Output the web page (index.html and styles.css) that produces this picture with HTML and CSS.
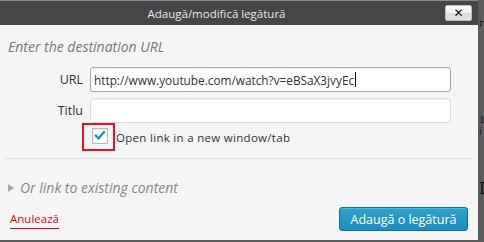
FILE: index.html
```html
<!DOCTYPE html>
<html lang="ro">
<head>
<meta charset="utf-8">
<title>Adaugă/modifică legătură</title>
<link rel="stylesheet" href="styles.css">
</head>
<body>
<div class="page">
  <div class="dialog">
    <div class="titlebar">
      <div class="title">Adaugă/modifică legătură</div>
      <button class="close" type="button" aria-label="Închide">✕</button>
    </div>
    <div class="content">
      <p class="hint">Enter the destination URL</p>
      <div class="row">
        <span class="label">URL</span>
        <div class="field focused"><span class="value">http://www.youtube.com/watch?v=eBSaX3jvyEc</span><span class="caret"></span></div>
      </div>
      <div class="row">
        <span class="label">Titlu</span>
        <div class="field"></div>
      </div>
      <div class="check-row">
        <span class="highlight">
          <span class="checkbox">
            <svg viewBox="0 0 16 16" width="14" height="14"><path d="M3.2 7.6 L6.4 10.8 L12.6 3.6" fill="none" stroke="#1e8cbe" stroke-width="2.6" stroke-linecap="square"/></svg>
          </span>
        </span>
        <span class="check-label">Open link in a new window/tab</span>
      </div>
      <div class="separator"></div>
      <div class="existing">
        <span class="triangle"></span>
        <span class="existing-text">Or link to existing content</span>
      </div>
    </div>
    <div class="footer">
      <a class="cancel" href="#">Anulează</a>
      <button class="submit" type="button">Adaugă o legătură</button>
    </div>
  </div>
  <div class="strip">
    <span class="frag f1">r</span>
    <span class="frag f2">1</span>
    <span class="frag f3">i</span>
    <span class="frag f4">I</span>
  </div>
</div>
</body>
</html>
```
FILE: styles.css
```css
html, body {
  margin: 0;
  padding: 0;
}
body {
  background: #5c5c5c;
  font-family: "Open Sans", "DejaVu Sans", sans-serif;
  width: 484px;
  height: 242px;
  overflow: hidden;
}
.page {
  display: flex;
  align-items: flex-start;
}
.dialog {
  width: 478px;
  height: 240px;
  background: #f5f5f5;
  display: flex;
  flex-direction: column;
  flex: none;
}
.titlebar {
  height: 24px;
  border-top: 1px solid #8a8a8a;
  background: #464646;
  display: flex;
  align-items: center;
  padding-right: 6px;
}
.title {
  flex: 1;
  text-align: center;
  color: #e8e8e8;
  font-size: 11.5px;
  padding-right: 12px;
}
.close {
  box-sizing: border-box;
  width: 27px;
  height: 16px;
  margin-top: -1px;
  padding: 0;
  border: 1px solid #bdbdbd;
  border-radius: 2px;
  background: linear-gradient(#fafafa 0%, #f2f2f2 50%, #dcdcdc 51%, #e2e2e2 100%);
  color: #111;
  font-size: 12px;
  font-weight: bold;
  line-height: 14px;
  font-family: "DejaVu Sans", sans-serif;
}
.content {
  padding: 0 5px;
}
.hint {
  margin: 13px 0 0 3px;
  font-size: 14px;
  line-height: 18px;
  font-style: italic;
  color: #7a7a7a;
}
.row {
  display: flex;
  align-items: center;
  gap: 6px;
  margin-top: 6px;
}
.hint + .row {
  margin-top: 11px;
}
.label {
  width: 78px;
  text-align: right;
  font-size: 12.5px;
  color: #333;
}
.field {
  width: 356px;
  height: 23px;
  margin-left: 1px;
  border: 1px solid #dcdcdc;
  border-radius: 3px;
  background: #fff;
  box-shadow: inset 0 1px 2px rgba(0,0,0,0.07);
  display: flex;
  align-items: center;
  padding-left: 3px;
  font-size: 11.8px;
  color: #333;
  box-sizing: content-box;
}
.field.focused {
  border-color: #a8a8a8;
}
.caret {
  width: 1px;
  height: 15px;
  background: #111;
  margin-left: 1px;
}
.check-row {
  display: flex;
  align-items: center;
  margin-left: 77px;
  gap: 1px;
}
.highlight {
  display: flex;
  border: 2px solid #e8141c;
  padding: 3px 5px 5px 8px;
}
.checkbox {
  width: 14px;
  height: 14px;
  border: 1px solid #b4b9be;
  background: #fff;
  box-shadow: inset 0 1px 2px rgba(0,0,0,0.1);
  display: flex;
  align-items: center;
  justify-content: center;
}
.check-label {
  font-size: 11.5px;
  letter-spacing: 0.3px;
  color: #333;
}
.separator {
  height: 1px;
  background: #dddddd;
  margin-top: 7px;
}
.existing {
  display: flex;
  align-items: center;
  margin: 20px 0 0 3px;
  gap: 6px;
  color: #888;
}
.triangle {
  width: 0;
  height: 0;
  border-top: 4px solid transparent;
  border-bottom: 4px solid transparent;
  border-left: 6px solid #a8a8a8;
}
.existing-text {
  font-size: 14px;
  line-height: 18px;
  font-style: italic;
}
.footer {
  margin-top: auto;
  padding: 0 10px 9px 10px;
  display: flex;
  align-items: center;
  justify-content: space-between;
}
.cancel {
  font-size: 11.5px;
  color: #e00b0b;
  text-decoration: none;
  border-bottom: 1px solid #e00b0b;
  line-height: 16px;
  padding-bottom: 1px;
  margin-top: 2px;
}
.submit {
  height: 24px;
  width: 129px;
  padding: 0;
  border: 1px solid #0074a2;
  border-radius: 3px;
  background: linear-gradient(#2ea2cc, #1e8cbe);
  box-shadow: inset 0 1px 0 rgba(120,200,230,0.5);
  color: #fff;
  font-family: "Open Sans", sans-serif;
  font-size: 12.5px;
}
.strip {
  width: 6px;
  display: flex;
  flex-direction: column;
  overflow: hidden;
  font-family: "DejaVu Serif", serif;
  color: #111;
}
.frag {
  display: block;
  margin-left: 1px;
  line-height: 1;
}
.f1 { font-size: 10px; margin-top: 18px; }
.f2 { font-size: 9px; margin-top: 88px; }
.f3 { font-size: 9px; margin-top: 2px; }
.f4 { font-size: 16px; margin-top: 45px; }
```
